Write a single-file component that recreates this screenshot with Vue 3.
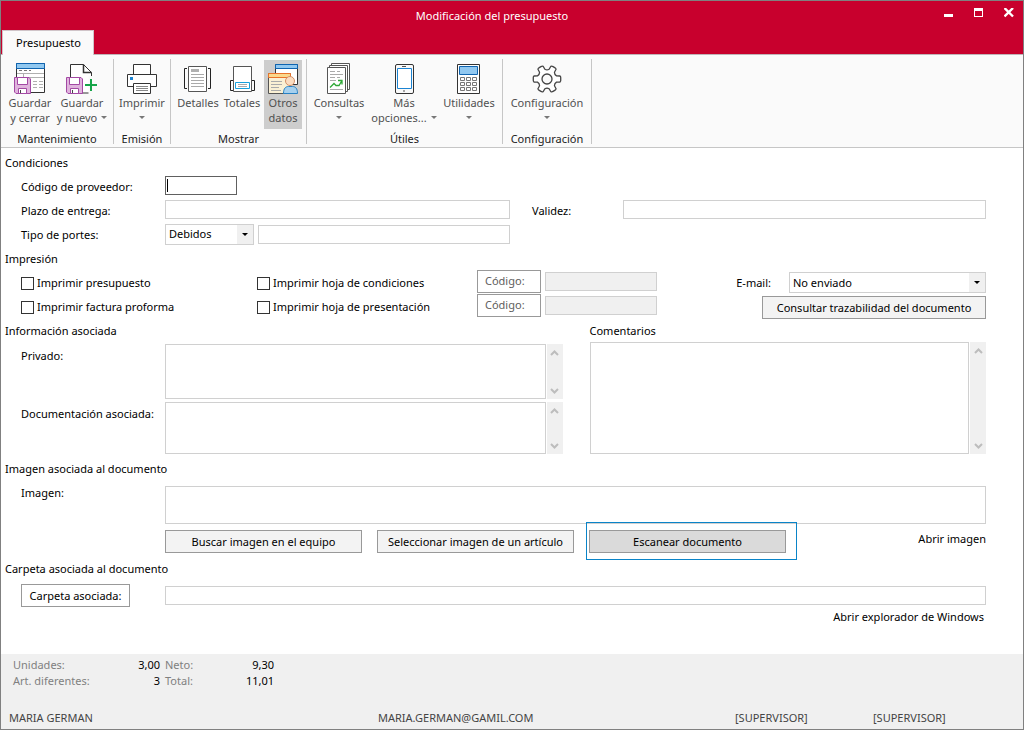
<script setup>
import { ref } from 'vue'

const groups = [
  {
    name: 'Mantenimiento', cls: 'g-save', buttons: [
      { icon: 'save', lines: ['Guardar', 'y cerrar'], w: 'w52' },
      { icon: 'savenew', lines: ['Guardar', 'y nuevo'], caret: true, w: 'w52' },
    ],
  },
  { name: 'Emisión', cls: 'g-print', buttons: [{ icon: 'print', lines: ['Imprimir'], caret: true, w: 'w56' }] },
  {
    name: 'Mostrar', cls: 'g-show', buttons: [
      { icon: 'details', lines: ['Detalles'], w: 'w44' },
      { icon: 'totals', lines: ['Totales'], w: 'w44' },
      { icon: 'other', lines: ['Otros', 'datos'], active: true, w: 'w38' },
    ],
  },
  {
    name: 'Útiles', cls: 'g-tools', buttons: [
      { icon: 'queries', lines: ['Consultas'], caret: true, w: 'w64' },
      { icon: 'phone', lines: ['Más', 'opciones...'], caret: true, w: 'w66' },
      { icon: 'calc', lines: ['Utilidades'], caret: true, w: 'w64' },
    ],
  },
  { name: 'Configuración', cls: 'g-config', buttons: [{ icon: 'gear', lines: ['Configuración'], caret: true, w: 'w88' }] },
]

const prints = ref([false, false, false, false])
const shipping = ref('Debidos')
const email = ref('No enviado')

// Outline of a six-toothed gear centred on (16, 17)
function gearPath() {
  const at = (r, deg) => {
    const a = (deg * Math.PI) / 180
    return `${(16 + r * Math.cos(a)).toFixed(2)} ${(17 + r * Math.sin(a)).toFixed(2)}`
  }
  let d = ''
  for (let i = 0; i < 6; i++) {
    const c = i * 60
    d += `${i ? 'L' : 'M'}${at(10, c - 18)}L${at(13.3, c - 13)}Q${at(14, c - 9)} ${at(13.8, c - 6)}L${at(13.8, c + 6)}Q${at(14, c + 9)} ${at(13.3, c + 13)}L${at(10, c + 18)}Q${at(8.6, c + 30)} ${at(10, c + 42)}`
  }
  return d + 'Z'
}
const gear = gearPath()
</script>

<template>
  <div class="window">
    <header class="titlebar">
      <div class="caption">
        <h1>Modificación del presupuesto</h1>
        <div class="controls">
          <button type="button" aria-label="Minimizar"><svg viewBox="0 0 10 10"><path d="M0 6h9v3H0z" fill="#fff" /></svg></button>
          <button type="button" aria-label="Maximizar"><svg viewBox="0 0 10 10"><path d="M0 0h9v9H0zM1 3v5h7V3z" fill="#fff" fill-rule="evenodd" /></svg></button>
          <button type="button" aria-label="Cerrar"><svg viewBox="0 0 10 10"><path d="M.5 0L9 8.500M9 0L.5 8.500" stroke="#fff" stroke-width="2.400" /></svg></button>
        </div>
      </div>
      <nav><button type="button" class="tab">Presupuesto</button></nav>
    </header>

    <div class="ribbon">
      <section v-for="g in groups" :key="g.name" class="group" :class="g.cls">
        <div class="tools">
          <button v-for="b in g.buttons" :key="b.icon" type="button" class="tool" :class="[b.w, { active: b.active }]">
            <svg class="icon" viewBox="0 0 32 32" fill="none" stroke="#333">
              <g v-if="b.icon === 'save'">
                <path d="M2.5 1.5h28v29h-28z" fill="#fff" />
                <path d="M2.5 1.5h28v5h-28z" fill="#91c8f0" stroke="#0f64b0" />
                <path d="M5 8.5h3m2 0h3m2 0h2" stroke="#777" />
                <path d="M3 11.5h27M9 15.5h21M9.5 12v3M19 19.5h4m2 0h4M19 22.5h4m2 0h4M19 25.5h4m2 0h4" stroke="#b0b0b0" />
              </g>
              <g v-if="b.icon === 'savenew'">
                <path d="M4.500 31V2.500H17.500L25.500 10.500V31z" fill="#fff" />
                <path d="M17.500 2.500V10.500H25.500" stroke-width="1.500" />
                <path d="M25 14v19" stroke="#fafafa" stroke-width="5" />
                <path d="M25 17v12M19 23h12" stroke="#16a549" stroke-width="2" />
              </g>
              <g v-if="b.icon === 'save' || b.icon === 'savenew'" stroke="#a349a4">
                <path d="M.5 15.500h14.500l1.500 1.500v14.500H2L.5 30z" fill="#e0b4dd" />
                <path d="M3.500 15.500h10v7h-10zM4.500 26.500h8v5h-8z" fill="#fff" />
                <path d="M6.500 28v3" stroke="#444" />
              </g>
              <g v-if="b.icon === 'print'">
                <path d="M7.500 12.500v-10h17v10M1.500 12.500h29v12h-29z" fill="#fff" />
                <path d="M7.500 21.500h17v10h-17z" fill="#fff" />
                <path d="M10 24.500h12M10 26.500h12M10 28.500h12" stroke="#888" />
                <path d="M4 15h3v3H4z" fill="#1c84d2" stroke="none" />
              </g>
              <g v-if="b.icon === 'details'">
                <path d="M6.500 4.500h18v25h-18z" fill="#fff" stroke="#555" />
                <path d="M9 7h8v3H9z" fill="#b0b0b0" stroke="none" />
                <path d="M9 12.500h13M9 15.500h13M9 18.500h13M9 21.500h13M9 24.500h13" stroke="#aaa" />
                <path d="M5 6.500H2.500v20H5M26 6.500h2.500v20H26" stroke="#222" />
              </g>
              <g v-if="b.icon === 'totals'">
                <path d="M7.500 4.500h18v25h-18z" fill="#fff" stroke="#555" />
                <path d="M7 18.500H4.500v10H7M26 18.500h2.500v10H26" stroke="#222" />
                <path d="M9.500 20.500h14v6h-14z" fill="#fff" stroke="#18a0dc" />
                <path d="M12 22.500h9M12 24.500h9" stroke="#aaa" />
              </g>
              <g v-if="b.icon === 'other'">
                <path d="M8.500 2.500h22v20h-22z" fill="#fff" />
                <path d="M8.500 2.500h22v4h-22z" fill="#91c8f0" stroke="#0f64b0" />
                <path d="M1.500 11.500h22v20h-22z" fill="#faf0d4" stroke="#555" />
                <path d="M1.500 11.500h22v4h-22z" fill="#fad88c" stroke="#e8732a" />
                <path d="M4 19.500h11M4 22.500h11M4 25.500h8M4 28.500h10" stroke="#aaa" />
                <path d="M16.500 31.500c0-5 2-7 5-7h4c3 0 5 2 5 7z" fill="#a6d0ee" stroke="#2882c4" />
                <circle cx="23" cy="19" r="4.500" fill="#fbdcc0" stroke="#d29068" />
              </g>
              <g v-if="b.icon === 'queries'" fill="#fff" stroke="#555">
                <path d="M8.500 1.500h18v26h-18z" /><path d="M6.500 3.500h18v26h-18z" /><path d="M4.500 5.500h18v26h-18z" />
                <path d="M7 9.500h5m2 0h3M7 12.500h13M7 15.500h5m2 0h3M7 18.500h6M7 27.500h13" stroke="#aaa" />
                <path d="M7 25.500l4-4 2 2h3l3-5M15 18.500h4v4" fill="none" stroke="#2ea836" stroke-width="1.300" />
              </g>
              <g v-if="b.icon === 'phone'">
                <rect x="7.500" y="2.500" width="18" height="29" rx="1.500" fill="#fafafa" />
                <path d="M9.500 6.500h14v20h-14z" fill="#fff" stroke="#1c84d2" />
                <path d="M14 4.500h4M15 29h2" stroke="#555" />
              </g>
              <g v-if="b.icon === 'calc'">
                <path d="M4.500 2.500h22v29h-22z" fill="#fff" />
                <path d="M6.500 4.500h18v8h-18z" fill="#91c8f0" stroke="#0f64b0" />
                <path v-for="y in [15, 20, 25]" :key="y" :d="`M7.5 ${y + 0.5}h4v3h-4zM13.5 ${y + 0.5}h4v3h-4zM19.5 ${y + 0.5}h4v3h-4z`" stroke="#777" />
              </g>
              <g v-if="b.icon === 'gear'" stroke="#444" stroke-width="1.300">
                <path :d="gear" fill="#fff" /><circle cx="16" cy="17" r="5" fill="#fafafa" />
              </g>
            </svg>
            <span class="line">{{ b.lines[0] }}</span>
            <span class="line">{{ b.lines[1] }}<svg v-if="b.caret" class="caret" viewBox="0 0 6 3"><path d="M0 0h6L3 3z" fill="#777" /></svg></span>
          </button>
        </div>
        <h2>{{ g.name }}</h2>
      </section>
    </div>

    <main>
      <h2>Condiciones</h2>
      <div class="conditions">
        <label for="proveedor">Código de proveedor:</label>
        <input id="proveedor" class="box current" type="text">
        <label for="plazo" class="first">Plazo de entrega:</label>
        <input id="plazo" class="box" type="text">
        <label for="validez" class="far">Validez:</label>
        <input id="validez" class="box" type="text">
        <label for="portes" class="first">Tipo de portes:</label>
        <div class="shipping">
          <div class="combo"><select id="portes" v-model="shipping"><option>Debidos</option><option>Pagados</option></select><svg class="drop" viewBox="0 0 16 19"><path d="M5 8h6L8 11z" /></svg></div>
          <input class="box" type="text" aria-label="Detalle de portes">
        </div>
      </div>

      <h2>Impresión</h2>
      <div class="printing">
        <div class="checks">
          <label><input v-model="prints[0]" type="checkbox">Imprimir presupuesto</label>
          <label><input v-model="prints[1]" type="checkbox">Imprimir hoja de condiciones</label>
          <label><input v-model="prints[2]" type="checkbox">Imprimir factura proforma</label>
          <label><input v-model="prints[3]" type="checkbox">Imprimir hoja de presentación</label>
        </div>
        <div class="codes">
          <button type="button" class="btn plain" disabled>Código:</button><input class="box" type="text" disabled aria-label="Código de condiciones">
          <button type="button" class="btn plain" disabled>Código:</button><input class="box" type="text" disabled aria-label="Código de presentación">
        </div>
        <div class="mail">
          <div class="mail-row">
            <label for="email">E-mail:</label>
            <div class="combo"><select id="email" v-model="email"><option>No enviado</option><option>Enviado</option></select><svg class="drop" viewBox="0 0 16 19"><path d="M5 8h6L8 11z" /></svg></div>
          </div>
          <button type="button" class="btn">Consultar trazabilidad del documento</button>
        </div>
      </div>

      <div class="info">
        <section>
          <h2>Información asociada</h2>
          <div class="notes">
            <label for="privado">Privado:</label>
            <div class="memo tall"><textarea id="privado"></textarea><div class="scroll"><svg viewBox="0 0 9 6"><path d="M1 5l3.500-3.500L8 5" /></svg><svg viewBox="0 0 9 6"><path d="M1 1l3.500 3.500L8 1" /></svg></div></div>
            <label for="documentacion">Documentación asociada:</label>
            <div class="memo"><textarea id="documentacion"></textarea><div class="scroll"><svg viewBox="0 0 9 6"><path d="M1 5l3.500-3.500L8 5" /></svg><svg viewBox="0 0 9 6"><path d="M1 1l3.500 3.500L8 1" /></svg></div></div>
          </div>
        </section>
        <section class="comments">
          <h2><label for="comentarios">Comentarios</label></h2>
          <div class="memo"><textarea id="comentarios"></textarea><div class="scroll"><svg viewBox="0 0 9 6"><path d="M1 5l3.500-3.500L8 5" /></svg><svg viewBox="0 0 9 6"><path d="M1 1l3.500 3.500L8 1" /></svg></div></div>
        </section>
      </div>

      <h2>Imagen asociada al documento</h2>
      <div class="image">
        <label for="imagen">Imagen:</label>
        <textarea id="imagen"></textarea>
        <div class="actions">
          <button type="button" class="btn">Buscar imagen en el equipo</button>
          <button type="button" class="btn">Seleccionar imagen de un artículo</button>
          <div class="marked"><button type="button" class="btn pressed">Escanear documento</button></div>
          <a href="#">Abrir imagen</a>
        </div>
      </div>

      <h2>Carpeta asociada al documento</h2>
      <div class="folder">
        <button type="button" class="btn plain">Carpeta asociada:</button>
        <input class="box" type="text" aria-label="Carpeta asociada">
      </div>
      <a class="explore" href="#">Abrir explorador de Windows</a>
    </main>

    <footer>
      <dl class="totals">
        <dt>Unidades:</dt><dd>3,00</dd><dt>Neto:</dt><dd>9,30</dd>
        <dt>Art. diferentes:</dt><dd>3</dd><dt>Total:</dt><dd>11,01</dd>
      </dl>
      <div class="status"><span>MARIA GERMAN</span><span>MARIA.GERMAN@GAMIL.COM</span><span>[SUPERVISOR]</span><span>[SUPERVISOR]</span></div>
    </footer>
  </div>
</template>

<style>
body { background: #fff; }
</style>

<style scoped>
.window, .window * { box-sizing: border-box; }
.window {
  min-height: 100vh; display: flex; flex-direction: column; border: 1px solid #808080;
  font: 11px/16px "Noto Sans", "Open Sans", sans-serif; color: #000; background: #fff;
}
button, input, select, textarea { font: inherit; color: inherit; border-radius: 0; }
button { padding: 0; border: 0; background: none; white-space: nowrap; }
h1, h2, dl, dd { margin: 0; font-size: inherit; font-weight: 400; }
a { color: inherit; text-decoration: none; }
svg { display: block; }

.titlebar { background: #c8002d; }
.caption { display: flex; height: 29px; padding-left: 50px; }
h1 { flex: 1; color: #fff; text-align: center; line-height: 30px; }
.controls { display: flex; }
.controls button { width: 30px; padding: 7px 0 0 11px; display: flex; }
.controls svg { width: 10px; height: 10px; }
nav { display: flex; height: 24px; padding-left: 1px; }
.tab { height: 25px; padding: 0 12px 0 13px; background: #fafafa; border: 1px solid #d0c4c8; border-bottom: 0; position: relative; }

.ribbon { display: flex; height: 94px; background: #fafafa; border-top: 1px solid #c0b4b8; border-bottom: 1px solid #c6c6c6; padding-top: 4px; }
.group { height: 85px; border-right: 1px solid #c6c6c6; padding-top: 1px; }
.group h2 { text-align: center; color: #222; line-height: 20px; }
.tools { display: flex; }
.tool { height: 69px; padding-top: 2px; display: flex; flex-direction: column; align-items: center; color: #505050; }
.tool.active { background: #cdcdcd; }
.icon { width: 32px; height: 32px; margin-bottom: 1px; }
.line { display: flex; align-items: center; justify-content: center; gap: 4px; height: 15px; }
.caret { width: 6px; height: 3px; }
.g-save { width: 113px; }
.g-save .tools { padding-left: 3px; }
.g-print { width: 57px; }
.g-show { width: 136px; }
.g-show .tools { padding-left: 5px; }
.g-tools { width: 196px; }
.g-config { width: 89px; }
.w38 { width: 38px; } .w44 { width: 44px; } .w52 { width: 52px; }
.w56 { width: 56px; } .w64 { width: 64px; } .w66 { width: 66px; } .w88 { width: 88px; }

main { flex: 1; padding: 3px 37px 12px 4px; }
main h2 { line-height: 24px; }
.box { width: 100%; min-width: 0; height: 19px; padding: 0 3px; border: 1px solid #d0d0d0; background: #fff; outline: 0; }
.box:disabled { background: #f0f0f0; }
.box.current { width: 72px; border-color: #606060; background: linear-gradient(#000, #000) 1px 2px / 1px 13px no-repeat #fff; }
.conditions { display: grid; grid-template-columns: 144px 345fr 113px 363fr; grid-auto-rows: 24px; align-items: center; padding-left: 16px; }
.conditions > .box { margin-bottom: 4px; }
.first { grid-column: 1; }
.far { padding-left: 22px; }
.shipping { display: flex; gap: 4px; align-items: center; margin-bottom: 2px; }
.shipping .combo { flex: 0 0 89px; }
.combo { display: flex; height: 21px; border: 1px solid #d0d0d0; background: #fff; position: relative; }
.combo select { flex: 1; min-width: 0; appearance: none; border: 0; background: none; padding: 0 16px 0 3px; outline: 0; }
.drop { position: absolute; right: 0; top: 0; width: 16px; height: 19px; background: #f0f0f0; pointer-events: none; }

.printing { display: flex; padding-left: 16px; }
.checks { display: grid; grid-template-columns: 236px 220px; grid-auto-rows: 24px; align-items: center; }
.checks label { display: flex; align-items: center; gap: 3px; }
.checks input { appearance: none; width: 13px; height: 13px; margin: 0; border: 1px solid #333; background: #fff; }
.checks input:checked { background: #333; }
.codes { display: grid; grid-template-columns: 64px 112px; grid-auto-rows: 24px; column-gap: 4px; align-items: center; }
.codes .btn { color: #606060; text-align: left; padding-left: 7px; margin-bottom: 4px; }
.codes .box { margin-bottom: 4px; }
.btn { height: 23px; border: 1px solid #999; background: #f3f3f3; }
.btn.plain { background: #fff; }
.btn.pressed { background: #dadada; }
.mail { margin-left: auto; display: flex; flex-direction: column; align-items: flex-end; padding-top: 1px; }
.mail-row { display: flex; align-items: center; gap: 18px; height: 21px; margin-bottom: 3px; }
.mail .combo { width: 197px; }
.mail .btn { width: 224px; }

.info { display: grid; grid-template-columns: 160px 1fr 1fr; column-gap: 0; }
.info > section:first-child { grid-column: 1 / 3; padding-right: 13px; }
.notes { display: grid; grid-template-columns: 144px 1fr; row-gap: 3px; padding: 1px 0 3px 16px; }
.notes label { line-height: 23px; }
.memo { display: flex; gap: 1px; height: 52px; }
.memo.tall { height: 55px; }
.comments { display: flex; flex-direction: column; padding: 0 0 3px 14px; }
.comments h2 { height: 23px; }
.comments .memo { flex: 1; }
textarea { display: block; flex: 1; width: 100%; min-width: 0; resize: none; border: 1px solid #d0d0d0; background: #fff; outline: 0; overflow: hidden; }
.scroll { width: 16px; display: flex; flex-direction: column; justify-content: space-between; align-items: center; padding: 6px 0 5px; background: #f0f0f0; }
.scroll svg { width: 9px; height: 6px; fill: none; stroke: #bdbdbd; stroke-width: 2; }

.image { display: grid; grid-template-columns: 144px 1fr; padding: 5px 0 4px 16px; row-gap: 6px; }
.image label { line-height: 14px; }
.image textarea { height: 38px; }
.actions { grid-column: 2; display: flex; gap: 15px; }
.actions .btn { width: 197px; }
.actions a { margin-left: auto; line-height: 18px; }
.marked { position: relative; }
.marked::after { content: ""; position: absolute; inset: -8px -11px -7px -3px; border: 1px solid #0a84c8; pointer-events: none; }
.folder { display: grid; grid-template-columns: 144px 1fr; align-items: center; padding: 3px 0 2px 16px; }
.folder .btn { width: 109px; }
.explore { display: block; text-align: right; padding-right: 2px; }

footer { background: #f0f0f0; padding: 3px 8px; }
.totals { display: grid; grid-template-columns: 92px 56px 56px 58px; padding-left: 4px; color: #808080; }
.totals dt:nth-of-type(even) { padding-left: 4px; }
.totals dd { text-align: right; color: #000; padding-right: 1px; }
.status { display: grid; grid-template-columns: 369fr 357fr 138fr 142fr; padding-top: 21px; color: #444; }
</style>
